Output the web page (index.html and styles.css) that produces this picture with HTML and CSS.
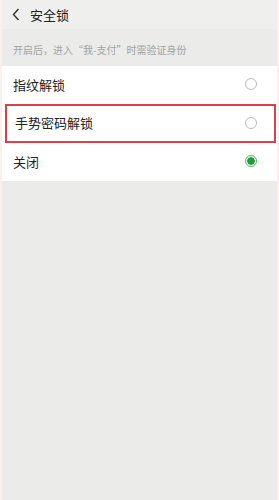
FILE: index.html
```html
<!DOCTYPE html>
<html lang="zh-CN">
<head>
  <meta charset="UTF-8">
  <meta name="viewport" content="width=device-width, initial-scale=1.0">
  <title>安全锁</title>
  <link rel="stylesheet" href="styles.css">
</head>
<body>
  <div class="screen">
    <div class="topbar">
      <svg class="back" width="8" height="13" viewBox="0 0 8 13">
        <path d="M6.5 1 L1.5 6.5 L6.5 12" fill="none" stroke="#333" stroke-width="1.4"/>
      </svg>
      <span class="title">安全锁</span>
    </div>
    <div class="hint">开启后，进入“我-支付”时需验证身份</div>
    <div class="list">
      <div class="row">
        <span>指纹解锁</span>
        <span class="radio"></span>
      </div>
      <div class="row marked">
        <span>手势密码解锁</span>
        <span class="radio"></span>
      </div>
      <div class="row">
        <span>关闭</span>
        <span class="radio on"></span>
      </div>
    </div>
  </div>
</body>
</html>
```

FILE: styles.css
```css
html, body {
  margin: 0;
  height: 100%;
}

body {
  font-family: "Noto Sans CJK SC", "Noto Sans", sans-serif;
  background-color: #ebebe9;
  color: #222;
}

.screen {
  height: 100%;
  box-sizing: border-box;
  border-left: 2px solid #fbf1ea;
  border-right: 2px solid #fbf1ea;
}

.topbar {
  height: 29px;
  display: flex;
  align-items: center;
  padding-left: 10px;
  background-color: #efefed;
}

.back {
  margin-right: 10px;
}

.title {
  font-size: 13px;
  color: #222;
}

.hint {
  height: 37px;
  line-height: 41px;
  padding-left: 11px;
  font-size: 10px;
  color: #a3a3a3;
}

.list {
  background-color: #fff;
}

.row {
  height: 38px;
  display: flex;
  align-items: center;
  justify-content: space-between;
  padding: 0 20px 0 11px;
  font-size: 13px;
  box-sizing: border-box;
  line-height: 1;
  padding-bottom: 2px;
}

.row.marked {
  height: 39px;
  margin: 0 1px 0 3px;
  padding: 0 17px 2px 8px;
  border: 2px solid #d8434b;
}

.radio {
  width: 10px;
  height: 10px;
  border: 1px solid #b9b9b9;
  border-radius: 50%;
  box-sizing: content-box;
}

.radio.on {
  border-color: #4cb85f;
  background: radial-gradient(circle, #1f9e35 0 3.5px, #fff 4px);
}
```
